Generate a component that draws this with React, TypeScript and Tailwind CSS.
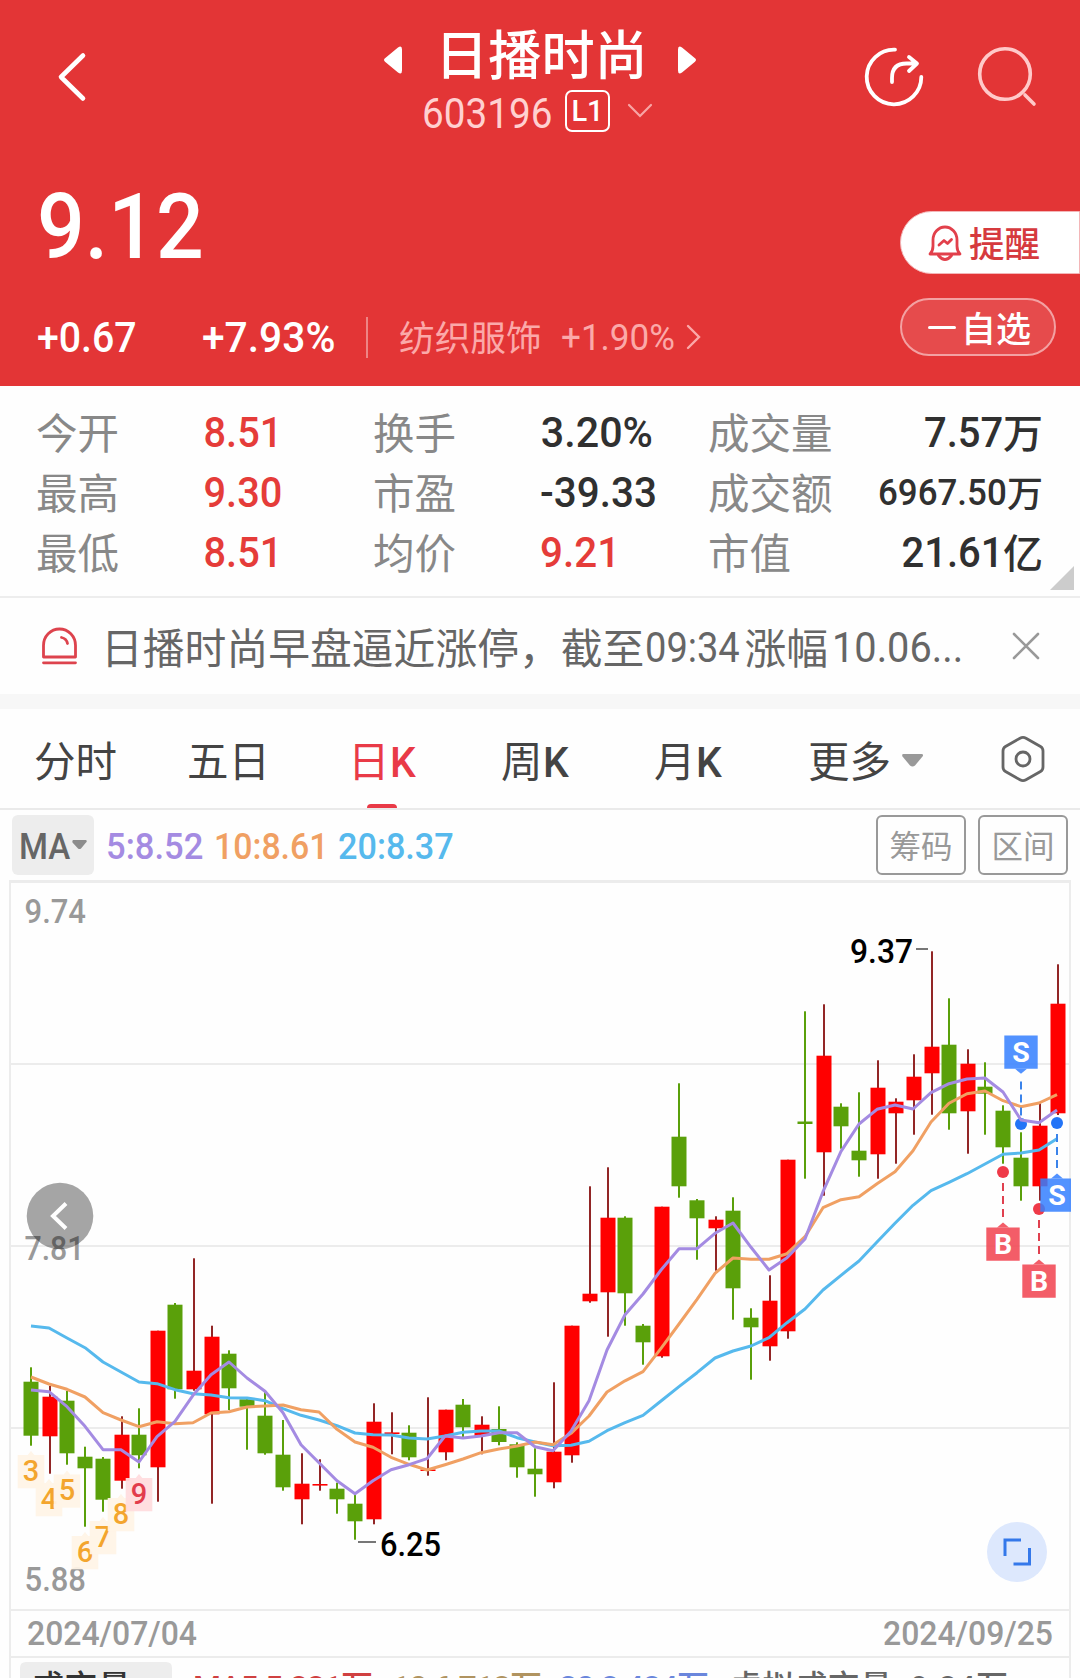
import type { ReactNode } from 'react';
import clsx from 'clsx';

interface NumProps {
  children: ReactNode;
  className?: string;
}

// Slightly condensed figures used for every price on the page
function Num({ children, className }: NumProps) {
  return (
    <span className={clsx("inline-block whitespace-nowrap font-['Roboto',sans-serif]", className)}>
      {children}
    </span>
  );
}

// [direction, open/close top, open/close bottom, high, low] in chart pixels
type Candle = ['r' | 'g', number, number, number, number];

const candles: Candle[] = [
  ['g', 1381.7, 1435.7, 1367.3, 1445.7],
  ['r', 1396.7, 1436.3, 1386, 1473.7],
  ['g', 1400.7, 1453.3, 1391, 1464.7],
  ['g', 1456.7, 1468.3, 1446.7, 1526.7],
  ['g', 1458.7, 1499.7, 1457, 1511.7],
  ['r', 1434.7, 1480.7, 1416.3, 1488.7],
  ['g', 1434.7, 1455.3, 1408.3, 1468.3],
  ['r', 1330.7, 1467.3, 1330.7, 1501.7],
  ['g', 1304.7, 1389.3, 1303, 1398.7],
  ['r', 1370.7, 1389.3, 1258.3, 1390.7],
  ['r', 1336.7, 1414.3, 1325.7, 1503.7],
  ['g', 1353.7, 1388.3, 1350.3, 1410],
  ['g', 1399.3, 1406.7, 1398, 1449.7],
  ['g', 1415.7, 1453.3, 1391, 1454.7],
  ['g', 1454.7, 1487.3, 1420, 1490.7],
  ['r', 1483.7, 1499.3, 1453.3, 1524.3],
  ['r', 1484, 1485.6, 1459.3, 1490.7],
  ['g', 1488.7, 1499.3, 1482.7, 1513.7],
  ['g', 1503.7, 1521.3, 1494.7, 1539.7],
  ['r', 1421.7, 1519.3, 1403.3, 1524.3],
  ['r', 1432.4, 1434, 1412.3, 1454.3],
  ['g', 1432.7, 1457.3, 1425.3, 1460.3],
  ['r', 1469.4, 1471, 1397.3, 1475.7],
  ['r', 1409.7, 1452.3, 1409.7, 1460.3],
  ['g', 1404.7, 1427.3, 1399, 1438],
  ['r', 1424.7, 1436, 1416.3, 1454.3],
  ['g', 1429, 1442, 1406.3, 1445.3],
  ['g', 1444.3, 1467.3, 1442.3, 1477.7],
  ['g', 1468.7, 1474.3, 1448.3, 1496.7],
  ['r', 1451.7, 1482.3, 1382.3, 1488.3],
  ['r', 1325.7, 1455.3, 1325.7, 1462.7],
  ['r', 1293.7, 1301.3, 1186.3, 1302.7],
  ['r', 1217.7, 1292.3, 1167.3, 1336.7],
  ['g', 1217.7, 1293.3, 1216.3, 1325.7],
  ['g', 1325.7, 1342.3, 1324, 1364.7],
  ['r', 1206.7, 1356.3, 1206.7, 1357.7],
  ['g', 1136.7, 1186.3, 1083.3, 1197.7],
  ['g', 1200.3, 1218.3, 1199, 1259.7],
  ['r', 1219.7, 1228.3, 1216.3, 1270.7],
  ['g', 1210.7, 1288.3, 1197.3, 1319.7],
  ['g', 1317.7, 1327.3, 1308.3, 1379.7],
  ['r', 1300.7, 1346.3, 1275.3, 1360.7],
  ['r', 1159.7, 1331.3, 1159.7, 1338.7],
  ['g', 1121.5, 1124, 1011.3, 1178.7],
  ['r', 1055.7, 1152.3, 1004.3, 1195.7],
  ['g', 1106.7, 1126.3, 1103.3, 1148.7],
  ['g', 1150.7, 1160.3, 1092.3, 1176.7],
  ['r', 1087.7, 1154.3, 1060.3, 1178.7],
  ['r', 1101.7, 1113.3, 1098.3, 1163.7],
  ['r', 1076.7, 1100.3, 1054.3, 1134.7],
  ['r', 1046.7, 1073.3, 951.3, 1114.7],
  ['g', 1044.7, 1113.3, 998.3, 1129.7],
  ['r', 1063.7, 1111.3, 1049.3, 1153.7],
  ['g', 1086.7, 1093.7, 1062.3, 1134.7],
  ['g', 1110.7, 1147.3, 1105.3, 1163.7],
  ['g', 1157.7, 1186.3, 1132.3, 1200.7],
  ['r', 1125.7, 1186.3, 1103.3, 1200.7],
  ['r', 1003.7, 1113.3, 964.3, 1115],
];

const ma5 = [
  1390, 1391.7, 1406.7, 1426.3, 1449.7, 1449.7, 1462, 1436.7, 1421.3, 1395.3, 1374.7, 1362, 1378, 1391.3, 1412.7,
  1444.7, 1462.7, 1480.7, 1493.7, 1480.7, 1469.7, 1464.7, 1458.7, 1436, 1438, 1436, 1432.7, 1432.7, 1446.7, 1450.7,
  1431.3, 1400.7, 1350, 1314.7, 1294, 1270, 1248.7, 1248.7, 1233.3, 1223, 1247.3, 1270, 1257.7, 1239, 1191.7,
  1151.3, 1124, 1109.3, 1105, 1109, 1092.7, 1083.7, 1079, 1078, 1092, 1120, 1122.7, 1110,
];

const ma10 = [
  1377, 1384, 1389.3, 1397, 1412.7, 1420, 1426.7, 1421.7, 1423.7, 1422.7, 1413, 1411.7, 1407, 1406, 1405, 1409.7,
  1412, 1429.3, 1442, 1447.3, 1457.3, 1464.3, 1470, 1464.7, 1459, 1452.7, 1449, 1446, 1442, 1444.7, 1433.3, 1416,
  1392, 1380.8, 1371.7, 1348.3, 1324, 1299.3, 1273.3, 1258, 1259.3, 1259.3, 1253.7, 1236.7, 1207.7, 1199.7, 1196.7,
  1183.7, 1171.7, 1150.7, 1122, 1103.3, 1093.7, 1091, 1100.7, 1106.7, 1103, 1094.7,
];

const ma20 = [
  1326, 1328, 1338, 1347.7, 1362, 1372, 1382, 1383.7, 1389.7, 1393.7, 1395, 1397.7, 1398, 1400.7, 1408.7, 1415.3,
  1420, 1425.7, 1433, 1434.7, 1435, 1438, 1439, 1436, 1432.3, 1431, 1431, 1437.7, 1442, 1445.7, 1445.3, 1441.3,
  1430.7, 1422.7, 1415.3, 1401, 1386.7, 1372.7, 1358, 1351, 1346, 1337.7, 1322.7, 1309, 1290, 1275.3, 1261, 1242,
  1223.3, 1205.3, 1190.7, 1182.3, 1173.7, 1164, 1154.3, 1153, 1150, 1138.7,
];

const turns = [
  { n: '3', x: 31, y: 1455 },
  { n: '4', x: 49, y: 1483 },
  { n: '5', x: 67, y: 1474.5 },
  { n: '6', x: 85, y: 1536 },
  { n: '7', x: 103, y: 1521 },
  { n: '8', x: 121, y: 1498 },
  { n: '9', x: 139, y: 1478 },
];

const trades = [
  { t: 'B', x: 1003, box: 1227.5, dot: 1172 },
  { t: 'B', x: 1039, box: 1264.5, dot: 1209 },
  { t: 'S', x: 1021, box: 1035.5, dot: 1124 },
  { t: 'S', x: 1057, box: 1178.5, dot: 1123 },
];

const stats = [
  ['今开', '8.51', '换手', '3.20%', '成交量', '7.57', '万'],
  ['最高', '9.30', '市盈', '-39.33', '成交额', '6967.50', '万'],
  ['最低', '8.51', '均价', '9.21', '市值', '21.61', '亿'],
];

const xAt = (i: number) => 31 + 18 * i;
const toPoints = (values: number[]) => values.map((v, i) => `${xAt(i)},${v}`).join(' ');

function Header() {
  return (
    <header className="h-[386px] bg-[#e33536] text-white">
      <div className="flex h-[150px] justify-between">
        <svg width="120" height="150" fill="none" stroke="#fff" strokeWidth="4.6" strokeLinecap="round" strokeLinejoin="round">
          <path d="M83 55.500 61 77l22 21.500" />
        </svg>
        <div className="flex w-[330px] flex-col items-center pt-[23px]">
          <div className="flex h-[60px] items-center justify-center gap-[33px]">
            <svg className="mt-[14px]" width="18" height="28" fill="#fff">
              <path d="M1 12.300 14 1.500q4-2.500 4 2v21q0 4.500-4 2L1 15.700q-2-1.700 0-3.400z" />
            </svg>
            <h1 className="-mt-[3px] -mr-[3px] w-[213px] whitespace-nowrap text-[53.200px] leading-[60px] font-medium">日播时尚</h1>
            <svg className="mt-[14px]" width="18" height="28" fill="#fff">
              <path d="M17 12.300 4 1.500q-4-2.500-4 2v21q0 4.500 4 2l13-10.800q2-1.700 0-3.400z" />
            </svg>
          </div>
          <div className="flex h-[56px] w-full items-center pl-[47px]">
            <Num className="mt-[5px] w-[143px] origin-left scale-x-[.91] text-[42.500px] leading-[54px] font-[450] text-[#ffd0d0]">603196</Num>
            <div className="flex h-[42px] w-[45px] items-center justify-center rounded-[7px] border-2 border-white">
              <Num className="text-[29px] leading-[38px] font-medium">L1</Num>
            </div>
            <svg className="ml-[17px]" width="26" height="16" fill="none" stroke="#f8a5a5" strokeWidth="2.2" strokeLinecap="round">
              <path d="m2 2 11 11L24 2" />
            </svg>
          </div>
        </div>
        <svg className="-ml-[120px]" width="240" height="150" fill="none" strokeLinecap="round" strokeLinejoin="round">
          <g stroke="#fff" strokeWidth="3.800">
            <path d="M55 49.700A27.300 27.300 0 1 0 81.300 77" />
            <path d="M52 82v-4q0-14.500 14.500-14.500H76M69 57l8 6.500-8 7.500" />
          </g>
          <g stroke="#ffc9c9" strokeWidth="3.600">
            <circle cx="165" cy="74" r="25.300" />
            <path d="m185 95 9 9" />
          </g>
        </svg>
      </div>

      <div className="flex h-[236px] justify-between">
        <div className="pl-[37px]">
          <Num className="mt-[22px] h-[110px] origin-left scale-x-[.93] text-[90.500px] leading-[110px] font-medium">9.12</Num>
          <div className="mt-[26px] flex h-[58px] items-center">
            <Num className="mt-[2px] w-[165px] origin-left scale-x-[.935] text-[42px] leading-[58px] font-medium">+0.67</Num>
            <Num className="mt-[2px] w-[164px] origin-left scale-x-[.97] text-[42px] leading-[58px] font-medium">+7.93%</Num>
            <div className="h-[41px] w-[2px] bg-[#ee8585]" />
            <span className="-mt-[3px] ml-[31px] w-[162px] text-[35.700px] leading-[58px] text-[#fba9a9]">纺织服饰</span>
            <Num className="w-[125px] origin-left scale-x-[.935] text-[37.500px] leading-[58px] font-[450] text-[#fba9a9]">+1.90%</Num>
            <svg width="16" height="26" fill="none" stroke="#fba9a9" strokeWidth="2.400" strokeLinecap="round">
              <path d="m2 2 11 11L2 24" />
            </svg>
          </div>
        </div>
        <div className="flex w-[180px] flex-col pt-[61px]">
          <div className="flex h-[63px] items-center rounded-l-full border border-[#f3b6b8] bg-white pl-[27px] text-[#d63a3e]">
            <svg width="34" height="38" fill="none" stroke="#e2404b" strokeWidth="2.800" strokeLinejoin="round" strokeLinecap="round">
              <path d="M2 30q3-3 3-8v-6a12 13 0 0 1 24 0v6q0 5 3 8z" />
              <path d="M10.500 31.500q6.500 8 13 0" />
              <path d="m11 21 5-4.500 3.500 3 4-4" />
            </svg>
            <span className="-mt-[1px] ml-[7px] text-[35.500px] leading-[60px] font-medium">提醒</span>
          </div>
          <div className="mt-[24px] flex h-[58px] w-[156px] items-center rounded-full border-2 border-[#f3a1a2] bg-[#e64b4c] pl-[26px]">
            <div className="h-[3px] w-[28px] rounded bg-white" />
            <span className="ml-[5px] text-[35px] leading-[54px] font-medium">自选</span>
          </div>
        </div>
      </div>
    </header>
  );
}

function Stats() {
  return (
    <section className="relative h-[212px] border-b-2 border-[#ededed] pt-[15px]">
      {stats.map(([a, av, b, bv, c, cv, unit], i) => (
        <div key={a} className="flex h-[60px] items-center text-[41.500px] leading-[60px] text-[#888]">
          <span className="w-[168px] pl-[36px]">{a}</span>
          <Num className="mt-[4px] w-[168px] origin-left scale-x-[.935] pl-[38px] text-[42.500px] font-medium text-[#e53c39]">{av}</Num>
          <span className="w-[168px] pl-[37px]">{b}</span>
          <Num
            className={clsx(
              'mt-[4px] w-[168px] origin-left pl-[38px] text-[42.500px] font-medium',
              i === 0 ? 'scale-x-[.97]' : 'scale-x-[.95]',
              i === 2 ? 'text-[#e53c39]' : 'text-[#303030]',
            )}
          >
            {bv}
          </Num>
          <span className="w-[170px] pl-[36px]">{c}</span>
          <div className="flex w-[201px] items-center justify-end font-medium text-[#303030]">
            <Num className={clsx('mt-[4px] origin-right', i === 1 ? 'scale-x-[.97] text-[36px]' : 'scale-x-[.94] text-[42.500px]')}>{cv}</Num>
            <span className={i === 1 ? 'text-[36px]' : 'text-[40px]'}>{unit}</span>
          </div>
        </div>
      ))}
      <svg className="absolute right-[6px] bottom-[6px]" width="24" height="24" fill="#ccc">
        <path d="M24 0v24H0z" />
      </svg>
    </section>
  );
}

function Notice() {
  return (
    <section className="flex h-[111px] items-start border-b-[15px] border-[#f7f7f7] pl-[40px] text-[#666]">
      <svg className="mt-[28px]" width="40" height="42" fill="none" stroke="#dd434d" strokeWidth="2.800" strokeLinecap="round" strokeLinejoin="round">
        <path d="M3.500 31V19.500a16 16.500 0 0 1 32 0V31zM3.500 36.800h32" />
        <path d="M21.500 11.500q5 1 6 6" />
      </svg>
      <p className="ml-[21px] flex w-[910px] whitespace-nowrap text-[41.800px] leading-[97px]">
        <span>日播时尚早盘逼近涨停，截至</span>
        <Num className="mt-[1px] -mr-[5px] ml-[1px] origin-left scale-x-[.91] font-[450]">09:34</Num>
        <span>涨幅</span>
        <Num className="mt-[1px] ml-[4px] origin-left scale-x-[.95] font-[450]">10.06...</Num>
      </p>
      <svg className="mt-[33px]" width="30" height="30" fill="none" stroke="#999" strokeWidth="2.600" strokeLinecap="round">
        <path d="m3 3 24 24M27 3 3 27" />
      </svg>
    </section>
  );
}

function Tabs() {
  return (
    <nav className="flex h-[101px] border-b-2 border-[#eaeaea] pl-[34px] text-[41.500px] leading-[100px] text-[#444]">
      <span className="w-[153px]">分时</span>
      <span className="w-[161px]">五日</span>
      <div className="relative w-[153px] text-[#e93a47]">
        日<Num className="origin-left scale-x-[.96] text-[42.500px] font-medium">K</Num>
        <div className="absolute bottom-0 left-[19px] h-[4px] w-[30px] rounded-t bg-[#e93a47]" />
      </div>
      <span className="w-[153px]">
        周<Num className="origin-left scale-x-[.96] text-[42.500px] font-medium">K</Num>
      </span>
      <span className="w-[154px]">
        月<Num className="origin-left scale-x-[.96] text-[42.500px] font-medium">K</Num>
      </span>
      <div className="flex w-[192px] items-center">
        更多
        <svg className="mt-[4px] ml-[11px]" width="21" height="13" fill="#999">
          <path d="M1.500 0h18q2.500 0 1 2.500l-7.500 9q-2.500 2-5 0L.5 2.500Q-.5 0 1.500 0z" />
        </svg>
      </div>
      <svg className="mt-[25px]" width="46" height="50" fill="none" stroke="#666" strokeWidth="2.800">
        <path d="M20 4.200q3-1.700 6 0l14.500 8.300q2.500 1.500 2.500 4.500v16q0 3-2.500 4.500L26 45.800q-3 1.700-6 0L5.500 37.500Q3 36 3 33V17q0-3 2.500-4.500z" />
        <circle cx="23" cy="25" r="7" />
      </svg>
    </nav>
  );
}

function Indicators() {
  return (
    <div className="flex h-[70px] items-start pt-[5px] pr-[12px] pl-[12px] text-[36px] leading-[60px]">
      <div className="flex h-[60px] w-[82px] items-center rounded-[6px] bg-[#ededed] pl-[7px]">
        <Num className="mt-[4px] w-[53px] origin-left scale-x-[.92] font-medium text-[#666]">MA</Num>
        <svg width="15" height="10" fill="#8c8c8c">
          <path d="M1 0h13q1.500 1 0 2.500L9 8.500q-1.500 1.200-3 0L.5 2.500Q0 1 1 0z" />
        </svg>
      </div>
      <Num className="mt-[2px] ml-[12px] w-[108px] origin-left scale-x-[.96] font-medium text-[#a48be2]">5:8.52</Num>
      <Num className="mt-[2px] w-[124px] origin-left scale-x-[.94] font-medium text-[#f0a063]">10:8.61</Num>
      <Num className="mt-[2px] w-[200px] origin-left scale-x-[.95] font-medium text-[#56b9ed]">20:8.37</Num>
      <div className="ml-auto flex gap-[12px] text-[31.500px] leading-[55px] text-[#999]">
        <div className="h-[60px] w-[90px] rounded-[6px] border-2 border-[#999] text-center">筹码</div>
        <div className="h-[60px] w-[90px] rounded-[6px] border-2 border-[#999] text-center">区间</div>
      </div>
    </div>
  );
}

function Chart() {
  return (
    <svg
      className="block font-['Roboto',sans-serif]"
      width="1080"
      height="798"
      viewBox="0 880 1080 798"
      fontSize="33"
      fontWeight="500"
    >
      <g fill="#ececec">
        <rect x="9" y="880" width="2" height="798" />
        <rect x="1069" y="880" width="2" height="798" />
        <rect x="9" y="880" width="1062" height="3" />
        {[1063, 1245, 1427, 1609, 1656].map((y) => (
          <rect key={y} x="9" y={y} width="1062" height="2" />
        ))}
      </g>

      <g fill="#999">
        <text x="24.500" y="923" textLength="61.500" lengthAdjust="spacingAndGlyphs">9.74</text>
        <text x="24.500" y="1260" textLength="60" lengthAdjust="spacingAndGlyphs">7.81</text>
        <text x="24.500" y="1591" textLength="61.500" lengthAdjust="spacingAndGlyphs">5.88</text>
        <text x="27" y="1645" textLength="170" lengthAdjust="spacingAndGlyphs">2024/07/04</text>
        <text x="883" y="1645" textLength="170" lengthAdjust="spacingAndGlyphs">2024/09/25</text>
      </g>

      <circle cx="60" cy="1216" r="33.300" fill="#000" fillOpacity=".35" />
      <path d="M66 1203.500 53 1216l13 12.500" fill="none" stroke="#fff" strokeWidth="4" />

      {candles.map(([dir, top, bottom, high, low], i) => {
        const up = dir === 'r';
        const x = xAt(i) + (up ? 1 : 0);
        return (
          <g key={i}>
            <rect x={x - 1} y={high} width="2" height={low - high} fill={up ? '#922626' : '#5aa00a'} />
            <rect x={x - 7.5} y={top} width="15" height={bottom - top} fill={up ? '#ff0000' : '#5aa00a'} />
          </g>
        );
      })}

      {turns.map(({ n, x, y }) => (
        <g key={n}>
          <path d={`M${x - 13.3} ${y}h10l3.300-4 3.300 4h10v33.300h-26.600z`} fill={n === '9' ? '#ffdbde' : '#fff4e6'} fillOpacity=".93" />
          <text x={x} y={y + 25.7} textAnchor="middle" fontSize="29" fill={n === '9' ? '#e23c4c' : '#f3a52e'}>
            {n}
          </text>
        </g>
      ))}

      {trades.map(({ t, x, dot }) => (
        <circle key={x} cx={x} cy={dot} r="6" fill={t === 'B' ? '#ef3a48' : '#2374f7'} />
      ))}

      <g fill="none" strokeWidth="3" strokeLinejoin="round">
        <polyline points={toPoints(ma20)} stroke="#56b9ed" />
        <polyline points={toPoints(ma10)} stroke="#f0a063" />
        <polyline points={toPoints(ma5)} stroke="#a48be2" />
      </g>

      {trades.map(({ t, x, box, dot }) => {
        const below = box > dot;
        const color = t === 'B' ? '#f1424f' : '#3580ff';
        const right = Math.min(x + 16.7, 1071);
        return (
          <g key={x}>
            <path
              d={below ? `M${x} ${dot + 11}V${box - 9}` : `M${x} ${box + 46}V${dot - 6}`}
              stroke={t === 'B' ? '#e0404f' : '#3b83ea'}
              strokeWidth="2"
              strokeDasharray="8 5"
            />
            <path d={`M${x - 16.7} ${box}H${right}v33.300H${x - 16.7}z`} fill={color} fillOpacity=".86" />
            <path d={below ? `M${x - 6} ${box}l6-5 6 5z` : `M${x - 6} ${box + 33.3}l6 5 6-5z`} fill={color} fillOpacity=".86" />
            <text x={x} y={box + 26.8} textAnchor="middle" fontSize="28.500" fontWeight="700" fill="#fff">
              {t}
            </text>
          </g>
        );
      })}

      <g fill="#000">
        <text x="850" y="963" textLength="63" lengthAdjust="spacingAndGlyphs">9.37</text>
        <text x="380" y="1556" textLength="61" lengthAdjust="spacingAndGlyphs">6.25</text>
      </g>
      <path d="M916 949h12M358 1542h18" stroke="#777" strokeWidth="2" />

      <circle cx="1017" cy="1552" r="30" fill="#dde8fd" />
      <path d="M1021 1540h-16v16M1013.500 1564h16v-16" fill="none" stroke="#3478ea" strokeWidth="3" />

      {/* Volume legend, cut off by the bottom of the screen */}
      <path d="M20 1678v-10q0-6 6-6h140q6 0 6 6v10z" fill="#ededed" />
      <g className="font-['Roboto','Noto_Sans_CJK_SC',sans-serif]" fontSize="32">
        <text x="31" y="1699" fontSize="33" fill="#333" textLength="100">成交量</text>
        <text x="193" y="1698" fill="#d04040" textLength="180">MA5:5.881万</text>
        <text x="392" y="1698" fill="#b0935f" textLength="150">10:6.718万</text>
        <text x="559" y="1698" fill="#6a86dc" textLength="150">20:8.484万</text>
        <text x="730" y="1698" fill="#666" textLength="278">虚拟成交量: 9.84万</text>
      </g>
    </svg>
  );
}

export default function App() {
  return (
    <main className="h-[1678px] w-[1080px] overflow-hidden bg-[#fefefe] font-['Noto_Sans_CJK_SC',sans-serif]">
      <Header />
      <Stats />
      <Notice />
      <Tabs />
      <Indicators />
      <Chart />
    </main>
  );
}
